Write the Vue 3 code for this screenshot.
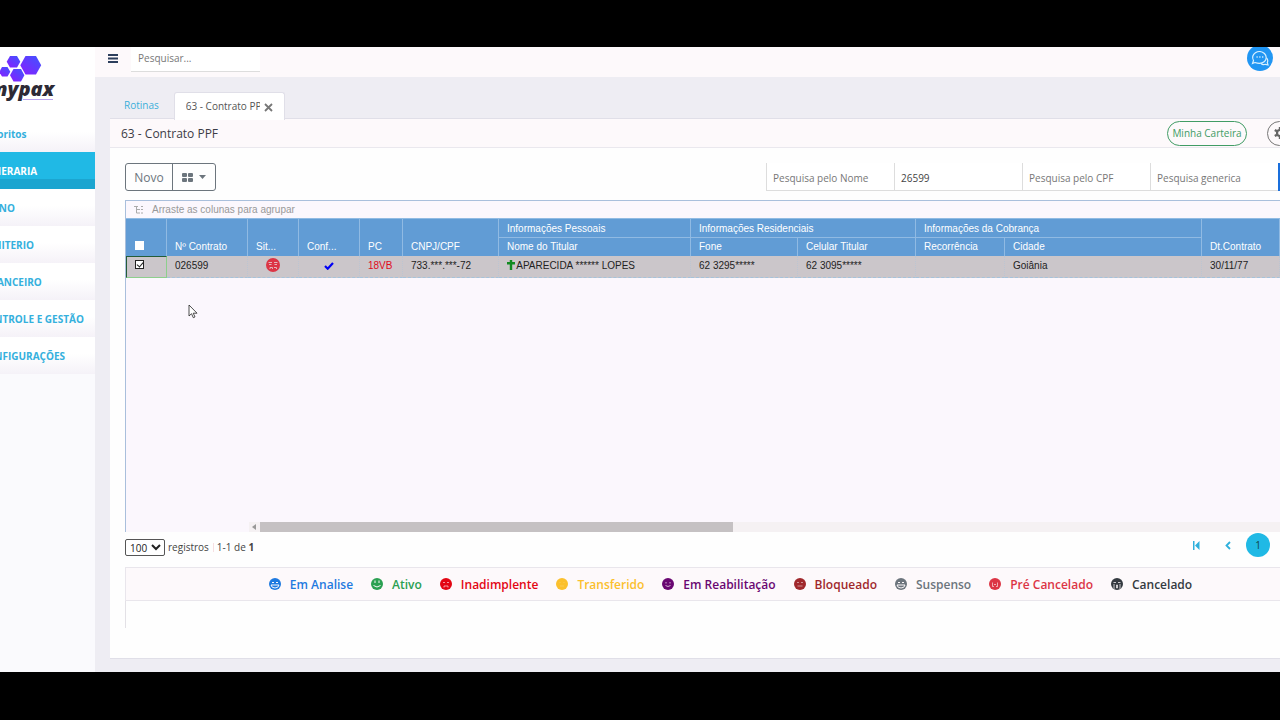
<script setup>
import { ref } from 'vue'

const menu = [
  { label: 'Favoritos' },
  { label: 'FUNERARIA', active: true },
  { label: 'PLANO' },
  { label: 'CEMITERIO' },
  { label: 'FINANCEIRO' },
  { label: 'CONTROLE E GESTÃO' },
  { label: 'CONFIGURAÇÕES' }
]

const filters = ref([
  { id: 'nome', placeholder: 'Pesquisa pelo Nome', value: '' },
  { id: 'contrato', placeholder: 'Pesquisa pelo Contrato', value: '26599' },
  { id: 'cpf', placeholder: 'Pesquisa pelo CPF', value: '' },
  { id: 'generica', placeholder: 'Pesquisa generica', value: '' }
])

const legend = [
  { label: 'Em Analise', key: 'analise', face: 'laugh' },
  { label: 'Ativo', key: 'ativo', face: 'smile' },
  { label: 'Inadimplente', key: 'inadimplente', face: 'sad' },
  { label: 'Transferido', key: 'transferido', face: 'plain' },
  { label: 'Em Reabilitação', key: 'reabilitacao', face: 'small' },
  { label: 'Bloqueado', key: 'bloqueado', face: 'flat' },
  { label: 'Suspenso', key: 'suspenso', face: 'laugh' },
  { label: 'Pré Cancelado', key: 'pre', face: 'tears' },
  { label: 'Cancelado', key: 'cancelado', face: 'cry' }
]

const search = ref('')
const pageSize = ref('100')
const allSelected = ref(false)
const rowSelected = ref(true)
</script>

<template>
  <div class="screen">
    <div class="app">
      <aside class="sidebar">
        <a href="#" class="logo" aria-label="mypax">
          <svg width="44" height="28" viewBox="0 0 44 28">
            <defs>
              <linearGradient id="hex" x1="1" y1="0" x2="0" y2="1">
                <stop offset="0" stop-color="#3f55ff" />
                <stop offset="1" stop-color="#8a1cff" />
              </linearGradient>
            </defs>
            <g fill="url(#hex)">
              <path d="M25.500 1h10.500l5.200 9.300-5.200 9.200H25.500l-5.200-9.200z" />
              <path d="M10 1h7l3.300 5.800-3.300 5.700h-7L6.700 6.800z" />
              <path d="M2 12h5.500l2.800 4.800-2.800 4.700H2l-2.800-4.700z" />
              <path d="M13.500 14h7.500l3.400 6.200-3.400 6.300h-7.500L10 20.200z" />
            </g>
          </svg>
          <span class="logo-text">mypax</span>
          <span class="logo-line"></span>
        </a>
        <nav class="menu">
          <a v-for="item in menu" :key="item.label" href="#" :class="{ active: item.active }">{{ item.label }}</a>
        </nav>
      </aside>

      <div class="main">
        <header class="topbar">
          <button type="button" class="burger" aria-label="Menu">
            <svg width="10" height="9" viewBox="0 0 10 9"><path d="M0 1h10M0 4.500h10M0 8h10" stroke="#2c3e5c" stroke-width="2" /></svg>
          </button>
          <input v-model="search" type="text" placeholder="Pesquisar..." aria-label="Pesquisar" />
          <button type="button" class="chat" aria-label="Chat">
            <svg width="18" height="18" viewBox="0 0 18 18" fill="none" stroke="#d8f0ff" stroke-width="1.200">
              <path d="M4 13.500l-2.500 1 1-3A6.800 6 0 1 1 13.500 12.500Q10 15.500 4 13.500z" />
              <path d="M15.500 9q2 2 .8 4.500l.7 2.500-2.500-.7q-3 1-4.500-1" />
              <path d="M5.500 8h1.200M8.300 8h1.200M11.100 8h1.200" stroke-width="1.600" />
            </svg>
          </button>
        </header>

        <div class="tabs">
          <a href="#" class="tab">Rotinas</a>
          <div class="tab current">
            <a href="#">63 - Contrato PPF</a>
            <button type="button" aria-label="Fechar">
              <svg width="9" height="9" viewBox="0 0 9 9"><path d="M1 1l7 7M8 1L1 8" stroke="#777" stroke-width="1.800" /></svg>
            </button>
          </div>
        </div>

        <section class="card">
          <div class="card-head">
            <h1>63 - Contrato PPF</h1>
            <button type="button" class="wallet">Minha Carteira</button>
            <button type="button" class="gear" aria-label="Configurações">
              <svg width="12" height="12" viewBox="0 0 12 12">
                <circle cx="6" cy="6" r="3" fill="none" stroke="#666" stroke-width="2.200" />
                <path d="M6 0v2.500M6 9.500V12M.8 3l2.200 1.300M9 7.700L11.200 9M.8 9L3 7.700M9 4.300L11.200 3" stroke="#666" stroke-width="2.400" />
              </svg>
            </button>
          </div>

          <div class="toolbar">
            <div class="group">
              <button type="button">Novo</button>
              <button type="button" aria-label="Opções">
                <svg width="11" height="9" viewBox="0 0 11 9" fill="#6c757d"><rect width="5" height="4" rx="1" /><rect x="6" width="5" height="4" rx="1" /><rect y="5" width="5" height="4" rx="1" /><rect x="6" y="5" width="5" height="4" rx="1" /></svg>
                <svg width="7" height="4" viewBox="0 0 7 4"><path d="M0 0h7L3.500 4z" fill="#6c757d" /></svg>
              </button>
            </div>
            <div class="filters">
              <input v-for="f in filters" :key="f.id" v-model="f.value" type="text" :placeholder="f.placeholder" :aria-label="f.placeholder" />
              <button type="button" aria-label="Pesquisar"></button>
            </div>
          </div>

          <div class="grid">
            <div class="group-bar">
              <svg width="10" height="10" viewBox="0 0 10 10" fill="none" stroke="#aaa"><path d="M0 1.500h4M2.500 1.500v6.500H6M2.500 4.500H6M7 1.500h2M7 4.500h2M7 8h2" /></svg>
              Arraste as colunas para agrupar
            </div>
            <table>
              <colgroup>
                <col class="c-check" /><col class="c-num" /><col class="c-sit" /><col class="c-conf" />
                <col class="c-pc" /><col class="c-cpf" /><col class="c-name" /><col class="c-phone" />
                <col class="c-cell" /><col class="c-rec" /><col class="c-city" /><col />
              </colgroup>
              <thead>
                <tr>
                  <th rowspan="2"><input v-model="allSelected" type="checkbox" aria-label="Selecionar todos" /></th>
                  <th rowspan="2">Nº Contrato</th>
                  <th rowspan="2">Sit...</th>
                  <th rowspan="2">Conf...</th>
                  <th rowspan="2">PC</th>
                  <th rowspan="2">CNPJ/CPF</th>
                  <th>Informações Pessoais</th>
                  <th colspan="2">Informações Residenciais</th>
                  <th colspan="2">Informações da Cobrança</th>
                  <th rowspan="2">Dt.Contrato</th>
                </tr>
                <tr>
                  <th>Nome do Titular</th>
                  <th>Fone</th>
                  <th>Celular Titular</th>
                  <th>Recorrência</th>
                  <th>Cidade</th>
                </tr>
              </thead>
              <tbody>
                <tr>
                  <td class="focused"><input v-model="rowSelected" type="checkbox" aria-label="Selecionar contrato 026599" /></td>
                  <td>026599</td>
                  <td class="center">
                    <svg width="14" height="14" viewBox="0 0 14 14">
                      <circle cx="7" cy="7" r="7" fill="#dc3545" />
                      <path d="M2.500 4.500h3.500M8 4.500h3.500M3 6.500h2.500M8.500 6.500H11M4 11V9.500h2.500V11M8 9.500h2.500V11" fill="none" stroke="#e5b5bb" />
                    </svg>
                  </td>
                  <td class="center">
                    <svg class="tick" width="10" height="8" viewBox="0 0 10 8"><path d="M1 4l2.700 2.700L9 1" fill="none" stroke="#0000f5" stroke-width="2.200" /></svg>
                  </td>
                  <td class="red">18VB</td>
                  <td>733.***.***-72</td>
                  <td>
                    <svg class="cross" width="8" height="10" viewBox="0 0 8 10"><path d="M4 0v10M0 3.200h8" stroke="#128a20" stroke-width="2.400" /></svg>
                    APARECIDA ****** LOPES
                  </td>
                  <td>62 3295*****</td>
                  <td>62 3095*****</td>
                  <td></td>
                  <td>Goiânia</td>
                  <td>30/11/77</td>
                </tr>
              </tbody>
            </table>
            <div class="scroll">
              <svg width="4" height="6" viewBox="0 0 4 6"><path d="M4 0v6L0 3z" fill="#999" /></svg>
              <div class="thumb"></div>
            </div>
          </div>

          <div class="pager">
            <select id="page-size" v-model="pageSize">
              <option>100</option>
              <option>200</option>
            </select>
            <label for="page-size">registros</label>
            <span class="bar"></span>
            <span>1-1 de <b>1</b></span>
            <div class="pages">
              <button type="button" aria-label="Primeira">
                <svg width="7" height="9" viewBox="0 0 7 9"><path d="M0 0h1.500v9H0zM6.500 0v9L2 4.500z" fill="#2fb0dc" /></svg>
              </button>
              <button type="button" aria-label="Anterior">
                <svg width="6" height="9" viewBox="0 0 6 9"><path d="M5 1L1.500 4.500 5 8" fill="none" stroke="#2fb0dc" stroke-width="1.800" /></svg>
              </button>
              <button type="button" class="on">1</button>
            </div>
          </div>

          <ul class="legend">
            <li v-for="s in legend" :key="s.key" :class="s.key">
              <svg width="12" height="12" viewBox="0 0 12 12">
                <circle cx="6" cy="6" r="6" fill="currentColor" />
                <g fill="none" stroke="#fdf9fb">
                  <template v-if="s.face === 'laugh'">
                    <path d="M3 4.500h2M7 4.500h2" />
                    <path d="M2 7h8q-.5 3-4 3T2 7z" />
                  </template>
                  <path v-else-if="s.face === 'smile'" d="M4 2.500v2.500M8 2.500v2.500M2.500 7.500q3.500 3 7 0" />
                  <path v-else-if="s.face === 'sad'" d="M3 4.500h2M7 4.500h2M4 9.500V8h4v1.500" stroke-opacity=".6" />
                  <path v-else-if="s.face === 'plain'" d="M4 4v1M8 4v1M4 8h4" stroke-opacity=".2" />
                  <path v-else-if="s.face === 'small'" d="M4 4v1.500M8 4v1.500M3.500 7.500Q6 9.500 8.500 7.500" stroke-opacity=".7" />
                  <path v-else-if="s.face === 'flat'" d="M3 4.500h2M7 4.500h2M3.500 8h5" stroke-opacity=".5" />
                  <path v-else-if="s.face === 'tears'" d="M3.500 4.500v4h1.500M8.500 4.500v4H7M5 6.500h2" stroke-opacity=".6" />
                  <path v-else d="M2.500 4.500h2.500M7 4.500h2.500M3 6v5M9 6v5M5.500 7v3h1V7z" stroke-opacity=".75" />
                </g>
              </svg>
              {{ s.label }}
            </li>
          </ul>
          <div class="panel"></div>
        </section>
      </div>

      <svg class="pointer" width="10" height="15" viewBox="0 0 10 15">
        <path d="M1 1v11l2.500-2.300 1.800 4 1.700-.8-1.800-3.700H9z" fill="#fff" stroke="#222" stroke-width=".8" />
      </svg>
    </div>
  </div>
</template>

<style>
body {
  margin: 0;
  background: #000;
}
</style>

<style scoped>
* { box-sizing: border-box; }

.screen {
  min-height: 100vh;
  padding: 47px 0 48px;
  display: flex;
  background: #000;
  font-family: "Open Sans", sans-serif;
  font-size: 10px;
  color: #444;
}

.app { position: relative; flex: 1; min-width: 0; display: flex; overflow: hidden; background: #eeedf3; }

button, input, select { font-family: inherit; font-size: inherit; color: inherit; margin: 0; }
button { background: none; border: 0; padding: 0; cursor: pointer; }
a { text-decoration: none; color: #3bafda; }
svg { display: block; flex: none; }

/* Sidebar */
.sidebar { width: 95px; flex: none; overflow: hidden; background: #fafafd; }
.logo { display: block; height: 68px; padding-top: 8px; background: #fff; overflow: hidden; }
.logo-text {
  display: flex;
  justify-content: flex-end;
  width: 54px;
  margin-top: -4px;
  font-size: 20px;
  line-height: 20px;
  font-weight: 800;
  font-style: italic;
  color: #2d2a35;
}
.logo-line { display: block; width: 30px; height: 1px; margin-left: 23px; background: #b9a2ee; }
.menu a {
  display: flex;
  align-items: center;
  height: 37px;
  margin-left: -20px;
  font-weight: 700;
  color: #35b0dd;
  white-space: nowrap;
  background: linear-gradient(#fff 45%, #f5f2f8);
}
.menu a.active {
  color: #fff;
  background: linear-gradient(#20b9e5 72%, #1ba5d0 73%);
}

/* Top bar */
.main { flex: 1; min-width: 0; display: flex; flex-direction: column; }
.topbar {
  display: flex;
  align-items: center;
  height: 30px;
  padding: 0 7px 8px 13px;
  overflow: hidden;
  background: #fdf9fb;
}
.topbar input {
  width: 129px;
  height: 27px;
  margin-left: 13px;
  padding: 0 7px;
  border: 0;
  border-bottom: 1px solid #ddd;
  background: #fff;
}
input::placeholder { color: #777; opacity: 1; }
.chat {
  display: flex;
  align-items: center;
  justify-content: center;
  flex: none;
  width: 26px;
  height: 26px;
  margin-left: auto;
  border-radius: 50%;
  background: #2196f3;
}

/* Tabs */
.tabs { position: relative; display: flex; padding: 15px 0 0 15px; }
.tab { display: flex; align-items: center; height: 26px; padding: 0 14px; }
.tab.current {
  width: 111px;
  height: 28px;
  margin: 0 0 -1px 1px;
  padding: 0 11px 2px;
  border: 1px solid #e0dfe8;
  border-bottom: 0;
  border-radius: 3px 3px 0 0;
  background: #fff;
}
.tab.current a { width: 75px; margin-right: 4px; overflow: hidden; white-space: nowrap; color: #555; }
.tab.current button { padding-top: 4px; }

/* Card */
.card {
  flex: 1;
  display: flex;
  flex-direction: column;
  margin: -1px 0 13px 15px;
  border: 1px solid #e0dfe8;
  border-width: 1px 0;
  background: #fefefe;
}
.card-head {
  display: flex;
  align-items: center;
  height: 29px;
  padding-left: 11px;
  border-bottom: 1px solid #eae8ee;
  background: #fdf9fb;
  overflow: hidden;
}
h1 { margin: 0; padding-top: 1px; font-size: 12px; font-weight: 400; color: #3c3c46; }
.wallet {
  height: 25px;
  width: 80px;
  margin-left: auto;
  border: 1px solid #419c65;
  border-radius: 13px;
  color: #419c65;
  white-space: nowrap;
}
.gear {
  display: flex;
  align-items: center;
  flex: none;
  width: 26px;
  height: 25px;
  margin: 0 -13px 0 20px;
  padding-left: 6px;
  border: 1px solid #777;
  border-radius: 13px;
}

.toolbar { display: flex; justify-content: space-between; padding: 15px 0 9px 15px; }
.group { display: flex; height: 28px; border: 1px solid #6c757d; border-radius: 3px; }
.group button {
  display: flex;
  align-items: center;
  justify-content: center;
  width: 46px;
  gap: 6px;
  font-size: 12px;
  color: #6c757d;
}
.group button + button { width: 43px; border-left: 1px solid #6c757d; }
.filters { display: flex; height: 28px; }
.filters input {
  width: 128px;
  padding: 2px 6px 0;
  border: 1px solid #ddd;
  border-width: 0 0 1px 1px;
  background: #fff;
}
.filters button { width: 2px; border-left: 2px solid #1a6fdc; }

/* Grid */
.grid {
  flex: 1;
  display: flex;
  flex-direction: column;
  margin-left: 15px;
  border: 1px solid #a9bfdc;
  border-width: 1px 0 0 1px;
  background: #fbf7fd;
  font-family: "Liberation Sans", Arial, sans-serif;
}
.group-bar { display: flex; align-items: center; gap: 8px; height: 17px; padding-left: 8px; color: #999; }
table { width: 100%; table-layout: fixed; border-collapse: separate; border-spacing: 0; }
.c-check { width: 41px; }
.c-num { width: 81px; }
.c-sit { width: 51px; }
.c-conf { width: 61px; }
.c-pc { width: 43px; }
.c-cpf { width: 96px; }
.c-name { width: 192px; }
.c-phone { width: 107px; }
.c-cell { width: 118px; }
.c-rec { width: 89px; }
.c-city { width: 197px; }
th, td { padding: 0 8px; text-align: left; white-space: nowrap; overflow: hidden; }
th {
  height: 19px;
  border: 1px solid #90bae3;
  border-width: 1px 1px 0 0;
  background: #619cd5;
  color: #fff;
  font-weight: 400;
  line-height: 17px;
  vertical-align: bottom;
}
th[rowspan], thead tr:last-child th { padding-bottom: 1px; }
th:first-child[rowspan] { padding-left: 9px; }
td {
  height: 22px;
  padding-top: 1px;
  border-bottom: 1px dashed #a5c3dc;
  border-right: 1px dotted #bcc5d2;
  background: #cbc6ca;
  color: #222;
  line-height: 17px;
  vertical-align: top;
}
td.red { color: #e00b1c; }
td.center svg { margin: 1px auto 0; }
td.center .tick { margin-top: 5px; }
td.focused { padding-top: 3px; border: 1px solid #8dcf8d; border-top-color: #245c38; border-left-color: #245c38; }
.cross { display: inline-block; vertical-align: -1px; margin-right: -1px; }
input[type="checkbox"] {
  appearance: none;
  display: block;
  width: 9px;
  height: 9px;
  background: #fff;
}
th input[type="checkbox"] { margin-bottom: 5px; }
td input[type="checkbox"] { border: 1px solid #222; }
td input[type="checkbox"]:checked::after {
  content: "";
  display: block;
  width: 3px;
  height: 5px;
  margin-left: 2px;
  border: solid #222;
  border-width: 0 1px 1px 0;
  transform: rotate(40deg);
}
.scroll {
  display: flex;
  align-items: center;
  gap: 4px;
  height: 10px;
  margin: auto 0 0 123px;
  padding-left: 3px;
  background: #f5f1f3;
}
.thumb { width: 46%; height: 10px; background: #c5c1c3; }

/* Pager */
.pager { display: flex; align-items: center; height: 35px; padding: 0 10px 5px 15px; }
select {
  width: 40px;
  height: 17px;
  padding: 0;
  border: 1px solid #555;
  border-radius: 2px;
  background: #fff;
  color: #222;
}
.pager label { margin-left: 3px; }
.bar { width: 1px; height: 9px; margin: 0 3px 0 4px; background: #f6dfe2; }
.pages { display: flex; align-items: center; margin: -4px 0 0 auto; }
.pages button { display: flex; align-items: center; justify-content: center; width: 32px; height: 24px; }
.pages .on { width: 24px; margin-left: 2px; border-radius: 50%; background: #20b9e5; color: #144; }

/* Legend */
.legend {
  display: flex;
  align-items: center;
  justify-content: center;
  gap: 18px;
  height: 34px;
  margin: 0 0 0 15px;
  padding: 0 0 0 55px;
  list-style: none;
  border: 1px solid #e9e6ec;
  border-width: 1px 0 1px 1px;
  background: #fdf9fb;
  font-size: 12px;
  font-weight: 600;
}
.legend li { display: flex; align-items: center; gap: 9px; white-space: nowrap; }
.analise { color: #1f7ae0; }
.ativo { color: #2ba052; }
.inadimplente { color: #e30613; }
.transferido { color: #fbc02d; }
.reabilitacao { color: #6a0772; }
.bloqueado { color: #a0282c; }
.suspenso { color: #6c757d; }
.pre { color: #dc3545; }
.cancelado { color: #343a40; }
.panel { height: 27px; margin: 0 0 30px 15px; border-left: 1px solid #e3e1e6; }

.pointer { position: absolute; left: 188px; top: 257px; }
</style>
